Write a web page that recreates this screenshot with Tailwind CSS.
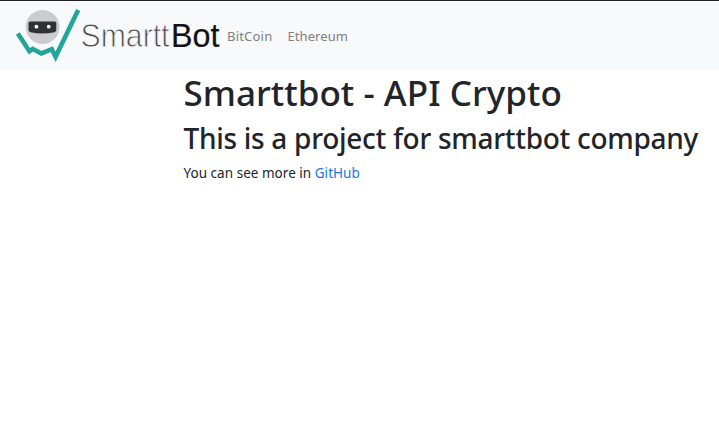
<!DOCTYPE html>
<html lang="en">
<head>
<meta charset="utf-8">
<title>Smarttbot - API Crypto</title>
<script src="https://cdn.jsdelivr.net/npm/@tailwindcss/browser@4"></script>
</head>
<body class="bg-white text-[#212529] font-['Noto_Sans',sans-serif] overflow-hidden">
<nav class="flex items-center h-[70px] bg-[#f8f9fa] border-t border-[#202124] pl-4">
  <a href="#" class="block shrink-0">
    <svg class="block overflow-visible" width="207" height="56" viewBox="16 7.5 207 56" role="img" aria-label="SmarttBot">
      <circle cx="42.6" cy="26.6" r="17" fill="#cbcccd"/>
      <path d="M28.5 22.6Q28.5 21 30.2 21H54.6Q56.3 21 56.3 22.6V29.6Q56.3 31.2 54.4 31.7Q42.5 34.2 30.4 31.7Q28.5 31.2 28.5 29.6Z" fill="#303133"/>
      <circle cx="36.4" cy="26.2" r="1.9" fill="#fff"/>
      <circle cx="48.7" cy="26.2" r="1.9" fill="#fff"/>
      <path d="M17.8 33L29.5 50.8L32.8 48.4L41.3 53L51.8 48.7L55.6 56.2L78.2 9.6" fill="none" stroke="#25a59a" stroke-width="4.6" stroke-linejoin="miter"/>
      <text x="80.5" y="46.3" font-size="33" textLength="89" lengthAdjust="spacingAndGlyphs" fill="#4c4d50" stroke="#f8f9fa" stroke-width="0.9" class="font-['Liberation_Sans',sans-serif]">Smartt</text>
      <text x="171" y="46.3" font-size="33" textLength="48.5" lengthAdjust="spacingAndGlyphs" fill="#111214" stroke="#111214" stroke-width="0.2" class="font-['Liberation_Sans',sans-serif]">Bot</text>
    </svg>
  </a>
  <ul class="flex gap-[15px] pl-[4px] text-[13px] leading-5 text-[#7f8081]">
    <li><a href="#" class="tracking-[0.2px]">BitCoin</a></li>
    <li><a href="#" class="tracking-[0.1px]">Ethereum</a></li>
  </ul>
</nav>
<main class="pl-[183.5px] whitespace-nowrap">
  <h1 class="text-[35px] leading-[42px] pt-[2px] font-medium tracking-[0.03px]">Smarttbot - API Crypto</h1>
  <h2 class="text-[28px] leading-[34px] pt-[7px] font-medium tracking-[-0.29px]">This is a project for smarttbot company</h2>
  <p class="text-[13.5px] leading-[21px] pt-[8px] tracking-[0.03px]">You can see more in <a href="#" class="text-[#1577e6]">GitHub</a></p>
</main>
</body>
</html>
